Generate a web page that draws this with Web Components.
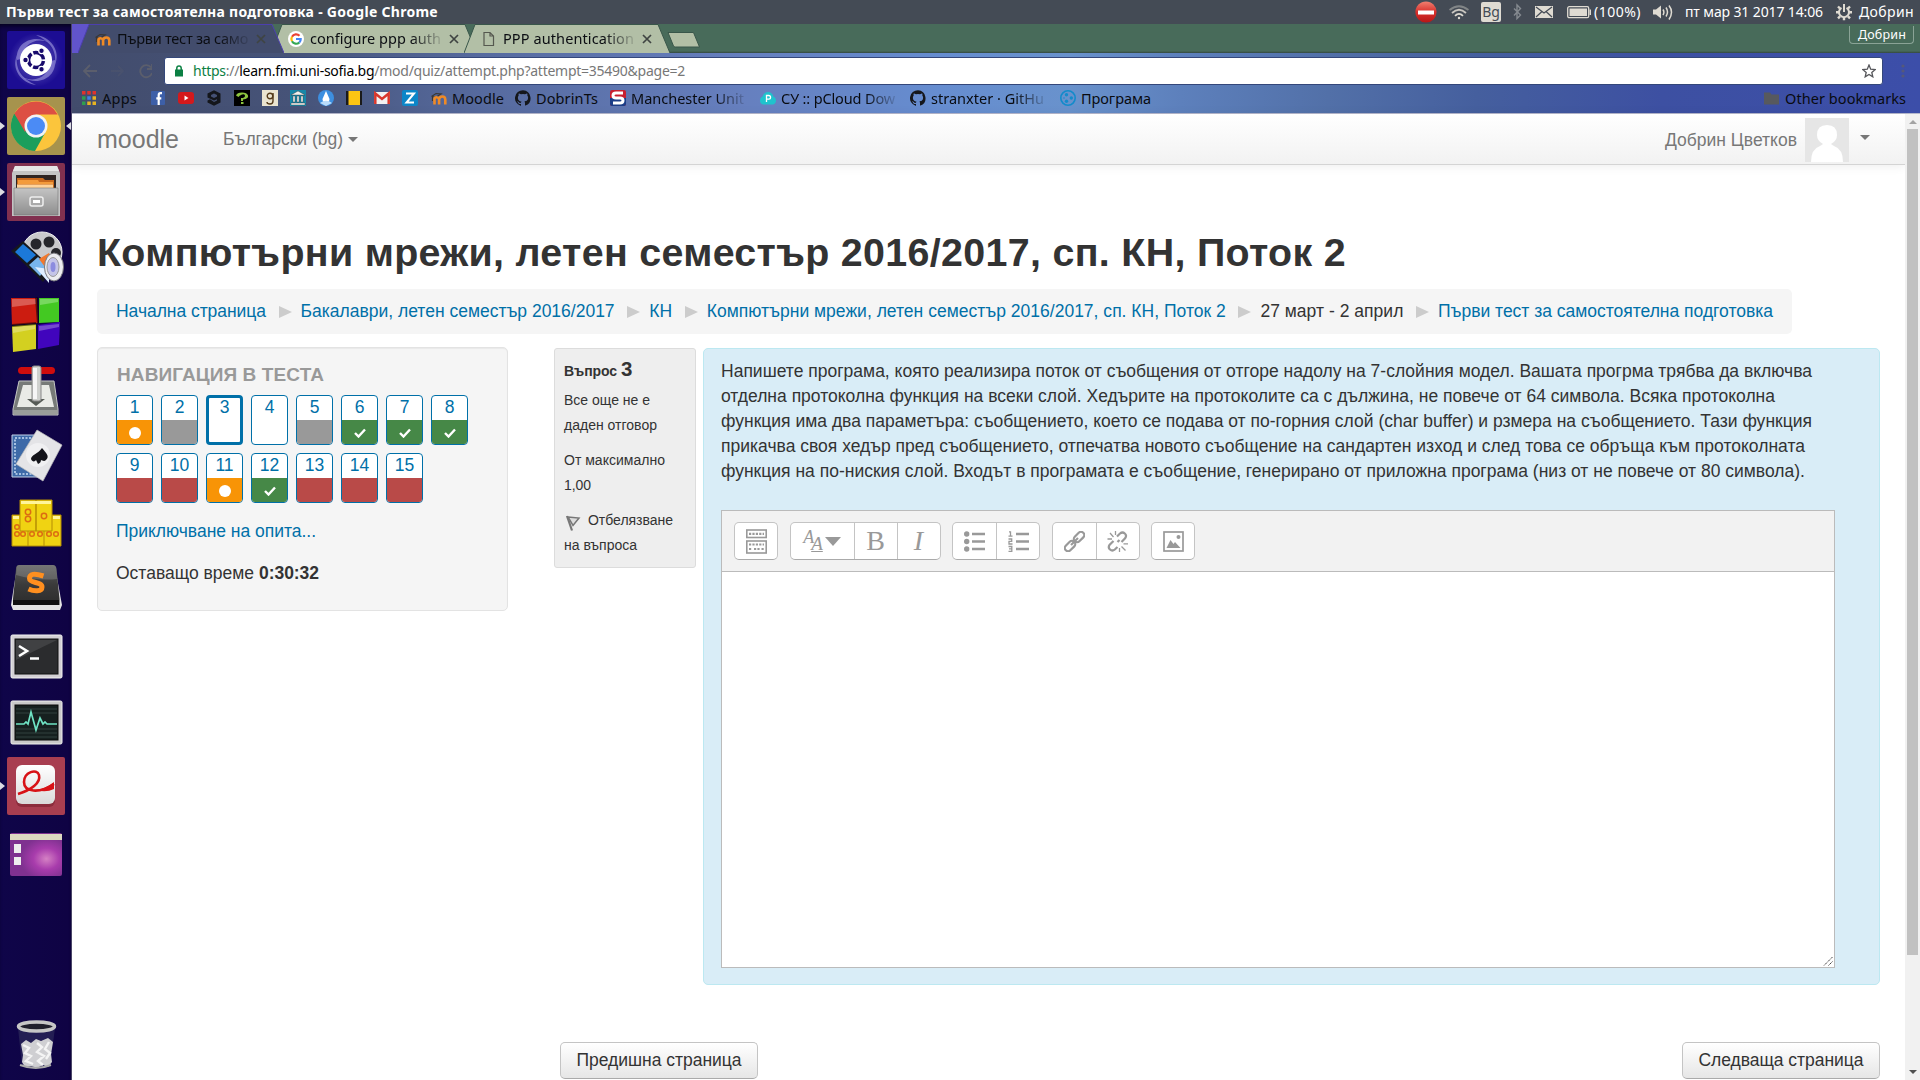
<!DOCTYPE html>
<html lang="bg">
<head>
<meta charset="utf-8">
<title>Първи тест за самостоятелна подготовка</title>
<style>
html,body{margin:0;height:1080px;overflow:hidden;background:#fff}
body{font-family:"Liberation Sans",sans-serif}
</style>
</head>
<body>
<desktop-screen></desktop-screen>
<script>
function define(name, html, setup) {
  const tpl = document.createElement('template');
  tpl.innerHTML = html;
  customElements.define(name, class extends HTMLElement {
    constructor() {
      super();
      this.attachShadow({mode: 'open'}).appendChild(tpl.content.cloneNode(true));
    }
    connectedCallback() {
      if (this.ready) return;
      this.ready = true;
      if (setup) setup(this, this.shadowRoot);
    }
  });
}

/* A single line of text tracked so that it fills the width given in "w". */
define('text-line', `<style>
:host{display:block;white-space:nowrap;flex:none}
span{display:inline-block;white-space:pre}
:host([fade]){-webkit-mask-image:linear-gradient(90deg,#000 calc(100% - 30px),rgba(0,0,0,.15));mask-image:linear-gradient(90deg,#000 calc(100% - 30px),rgba(0,0,0,.15))}
</style><span><slot></slot></span>`, (el, root) => {
  const w = parseFloat(el.getAttribute('w'));
  if (!w) return;
  el.style.width = w + 'px';
  const s = root.querySelector('span');
  const n = el.textContent.length;
  s.style.letterSpacing = ((w - s.getBoundingClientRect().width) / n).toFixed(3) + 'px';
});

define('system-bar', `<style>
:host{display:flex;height:24px;background:#444b55;color:#fff;align-items:center;font:14px/24px "Noto Sans",sans-serif;flex:none}
b{font-weight:700;font-size:14px}
svg{display:block;flex:none}
.title{margin-left:6px;flex:1}
.kb{width:20px;height:20px;border-radius:2px;background:#dfdbd2;color:#444b55;font:14px/20px "Noto Sans",sans-serif;text-align:center;margin:0 12px;flex:none}
</style>
<b class="title"><text-line w="432">Първи тест за самостоятелна подготовка - Google Chrome</text-line></b>
<svg width="22" height="24" viewBox="0 0 22 24"><defs><linearGradient id="r" x2="0" y2="1"><stop stop-color="#f08070"/><stop offset=".5" stop-color="#d8302c"/><stop offset="1" stop-color="#b81616"/></linearGradient></defs><circle cx="11" cy="12" r="10.6" fill="url(#r)"/><rect x="3" y="10.5" width="16" height="4" fill="#fff"/></svg>
<svg width="20" height="24" viewBox="0 0 20 24" style="margin-left:12px" fill="none" stroke="#dfdbd2" stroke-width="1.8"><path d="M.5 10Q10 2.500 19.500 10" opacity=".4"/><path d="M3 13Q10 6.500 17 13" opacity=".85"/><path d="M6 15.800Q10 11.800 14 15.800"/><circle cx="10" cy="18" r="1.200" fill="#dfdbd2" stroke="none"/></svg>
<div class="kb">Bg</div>
<svg width="9" height="24" viewBox="0 0 9 24" fill="none" stroke="#858a90" stroke-width="1.4"><path d="M1 8.500l6.500 6.500-3.500 3.500V5l3.500 3.500L1 15.500"/></svg>
<svg width="18" height="24" viewBox="0 0 18 24" style="margin-left:13px"><rect y="6" width="18" height="12" fill="#dfdbd2"/><path d="M1 7l8 6 8-6M1 17l6-5.500M17 17l-6-5.500" fill="none" stroke="#444b55" stroke-width="1.200"/></svg>
<svg width="25" height="24" viewBox="0 0 25 24" style="margin:0 2px 0 14px"><rect x=".7" y="6.700" width="21" height="11" rx="1.500" fill="none" stroke="#dfdbd2" stroke-width="1.300"/><rect x="2.500" y="8.500" width="17.500" height="7.500" fill="#dfdbd2"/><rect x="22.500" y="9.500" width="1.500" height="5.500" fill="#dfdbd2"/></svg>
<text-line w="47">(100%)</text-line>
<svg width="20" height="24" viewBox="0 0 20 24" style="margin-left:12px" fill="none" stroke="#dfdbd2" stroke-width="1.500"><path d="M0 9.500h3L8 5.500v13L3 14.500H0z" fill="#dfdbd2" stroke="none"/><path d="M10 9.500q1.800 2.700 0 5.500M13 7.500q3 4.500 0 9M16 5.500q5 6.500 0 14"/></svg>
<text-line w="138" style="margin-left:12px">пт мар 31 2017 14:06</text-line>
<svg width="16" height="24" viewBox="0 0 16 24" style="margin:0 7px 0 13px" fill="none" stroke="#dfdbd2"><path d="M5.500 7.800a5 5 0 1 0 5 0" stroke-width="2"/><path d="M8 4v8" stroke-width="2"/><path d="M2 6.500l2 2M14 6.500l-2 2M0 12.300h3M13 12.300h3M2 18.300l2-2M14 18.300l-2-2M8 17.300v3" stroke-width="2.400"/></svg>
<text-line w="55" style="margin-right:6px">Добрин</text-line>`);

/* Launcher */
const DOCK = {
ubuntu: ['#1c0d93', '', `<defs><radialGradient id="g"><stop stop-color="#a9a4e8"/><stop offset="1" stop-color="#a9a4e8" stop-opacity="0"/></radialGradient></defs><circle cx="29" cy="29" r="27" fill="url(#g)" opacity=".55"/><path d="M10 29C8 12 26 2 43 12C28 5 16 14 14 28zM48 29c2 17-16 27-33 17c15 7 27-2 29-16z" fill="#b9b5ee" opacity=".5"/><path d="M29 4C44 6 54 20 48 34 50 18 42 10 29 4zM29 54C14 52 4 38 10 24 8 40 16 48 29 54z" fill="#b9b5ee" opacity=".5"/><circle cx="29" cy="29" r="16" fill="#fff"/><circle cx="29" cy="29" r="7.500" fill="none" stroke="#17096b" stroke-width="3.500" stroke-dasharray="13.700 2" stroke-dashoffset="-1"/><g fill="#17096b" stroke="#fff" stroke-width="1.200"><circle cx="18.500" cy="29" r="2.800"/><circle cx="34.500" cy="19.800" r="2.800"/><circle cx="34.500" cy="38.200" r="2.800"/></g>`],
chrome: ['#a6934d', 'lr', `<circle cx="29" cy="29" r="25" fill="#fbc53c"/><path d="M7.300 16.500A25 25 0 0 0 28 54L38 36 29 29 20 33z" fill="#1b9e5c"/><path d="M7.300 16.500A25 25 0 0 1 50.700 17.500H29L18 35z" fill="#dd4f43"/><circle cx="29" cy="29" r="11.500" fill="#f3f3f3"/><circle cx="29" cy="29" r="9" fill="#4b8bf5"/>`],
files: ['#81304f', 'l', `<defs><linearGradient id="f" x2="0" y2="1"><stop stop-color="#c4c4c4"/><stop offset="1" stop-color="#8e8e8e"/></linearGradient></defs><path d="M8 3h42l3 7v43H5V10z" fill="#c4c4c4"/><path d="M8 3h42l2 5H6z" fill="#e6e6e6"/><path d="M9 12h40v13H9z" fill="#2f2523"/><path d="M10 15h26l2 2h9v8H10z" fill="#c96a1e"/><path d="M11 17h20l1 2h14v2H11z" fill="#f39b3c"/><path d="M10 21.500h36V25H10z" fill="#ffd39a"/><path d="M7 25h44v27H7z" fill="url(#f)" stroke="#777" stroke-width=".6"/><rect x="23" y="34" width="13" height="9" rx="2" fill="#aaa" stroke="#eee" stroke-width="1.500"/><rect x="26" y="37" width="7" height="3" fill="#fff"/>`],
video: ['', '', `<ellipse cx="35" cy="23" rx="20" ry="20" fill="#c9c9cb" stroke="#eee"/><g fill="#26262b"><circle cx="29" cy="15" r="5.500"/><circle cx="42" cy="13" r="5.500"/><circle cx="49" cy="24" r="5"/><circle cx="22" cy="24" r="4"/></g><path d="M16 12L46 40 36 53 4 22z" fill="#16181d"/><path d="M16 15L29 26 20 34 8 23z" fill="#1c79d8"/><path d="M31 28l10 9-8 10-11-11z" fill="#78b5ec"/><path d="M32 30l10-6 4 8-8 6z" fill="#f2782c"/><path d="M28 38l14 2v14z" fill="#dfeeff"/><ellipse cx="47" cy="38" rx="9.500" ry="14" fill="#ececf0" stroke="#77777c"/><ellipse cx="46" cy="38" rx="6" ry="9.500" fill="#c4c4e8" stroke="#999"/><ellipse cx="46" cy="38" rx="2.500" ry="5" fill="#8c8cdf"/>`],
blocks: ['', '', `<path d="M4 3h26l1 25-26 2z" fill="#cc1c10"/><path d="M32 3h20v24l-20 1z" fill="#43c922"/><path d="M5 31l24-2v25L6 57z" fill="#d3d020"/><path d="M31 30l22-3-1 23-21 4z" fill="#4105bd"/><path d="M5 4h24v5L5 12zM33 4h18v3l-18 3zM6 32l22-2v4L6 38zM32 31l20-2v3l-20 4z" fill="#fff" opacity=".28"/><path d="M28 3l3-1 1 26-2 1zM5 29l24-2v3L5 32z" fill="#000" opacity=".5"/>`],
lever: ['', '', `<g transform="translate(0 2)"><path d="M12 18h35l4 28v6H6v-6z" fill="#777b78" stroke="#c3c5c3"/><path d="M16 22h26l5 22H10z" fill="#e9ebe6"/><path d="M20 36h18l-9 7z" fill="#555b55"/><path d="M7 47h43v4H7z" fill="#9a9e9a"/><rect x="11" y="4" width="37" height="7" rx="3.500" fill="#cf0d0d"/><rect x="25" y="3" width="9" height="35" rx="2" fill="#cfd1ce" stroke="#888"/><path d="M26 5h4v31h-4z" fill="#f6f6f6"/></g>`],
cards: ['', '', `<path d="M5 8h26v42H5z" fill="#3e6aa8" stroke="#c4d3e8"/><path d="M8 11h20v36H8z" fill="none" stroke="#a7c1e2" stroke-width="2" stroke-dasharray="2 1.500"/><path d="M30 3l25 15-19 36-27-17z" fill="#e4e4e7" stroke="#bbb" stroke-width=".7"/><circle cx="31" cy="28" r="12" fill="#f0f0f2"/><path d="M35 21c4 5 8 8 4 12-2 2-4 0-5 0 0 2-1 3-3 4l-2-4c-1 2-4 2-5-1 0-4 7-5 11-11z" fill="#14141a"/>`],
mahjong: ['', '', `<g fill="#f0d312" stroke="#b58d05"><path d="M5 22h49v31H5z"/><path d="M21 38v15M37 38v15"/><path d="M13 7h16v31H13zM29 7h16v31H29z"/></g><path d="M14 8h30v3H14zM6 23h6v3H6zM46 23h7v3h-7z" fill="#fff59a"/><g fill="none" stroke="#dc6d12" stroke-width="1.500"><circle cx="21" cy="19" r="2.700"/><circle cx="21" cy="26" r="2.700"/><circle cx="37" cy="23" r="2.700"/><circle cx="10" cy="34" r="2.300"/><circle cx="10" cy="41" r="2.300"/><circle cx="16" cy="41" r="2.300"/><circle cx="25" cy="41" r="2.300"/><circle cx="33" cy="41" r="2.300"/><circle cx="42" cy="41" r="2.300"/><circle cx="49" cy="41" r="2.300"/></g>`],
sublime: ['', '', `<defs><linearGradient id="s" x2="0" y2="1"><stop stop-color="#5a5a5a"/><stop offset=".5" stop-color="#3a3a3a"/><stop offset="1" stop-color="#2c2c2c"/></linearGradient></defs><path d="M10 8h38l7 38-2 5H6l-2-5z" fill="#e4e4e4"/><path d="M12 6h34q3 0 3.500 4l3 30v6H6v-6l3-30q0-4 3-4z" fill="url(#s)"/><path d="M6 41h46v5H6z" fill="#111"/><path d="M12 6h34q3 0 3.500 4l1 10Q30 22 9 16l.5-6q0-4 2.500-4z" fill="#fff" opacity=".17"/><path d="M36.500 17q-14-4.500-14 2.500c0 5 12.500 3 12.500 8.500 0 5-8 4.500-13.500 2" fill="none" stroke="#ff8f1f" stroke-width="5"/>`],
terminal: ['', '', `<g transform="translate(0 3)"><rect x="4" y="7" width="51" height="43" rx="1.500" fill="#d3d0d4" stroke="#f2f2f2"/><rect x="8" y="11" width="43" height="35" fill="#2b2c2e" stroke="#111"/><path d="M9 12h41L9 32z" fill="#fff" opacity=".1"/><path d="M12 18l8 5-8 5M23 30.500h9" fill="none" stroke="#fff" stroke-width="2.600"/></g>`],
monitor: ['', '', `<g transform="translate(0 3)"><rect x="4" y="7" width="51" height="43" rx="1.500" fill="#c9c9c9" stroke="#efefef"/><rect x="8" y="11" width="43" height="35" fill="#16201f" stroke="#0a0a0a"/><path d="M9 15h41M9 19h41M9 35h41M9 39h41M9 43h41" stroke="#30403e"/><path d="M9 30h8l2-2 2 2 3-12 5 18 4-12 3 6 2-2 2 2h10" fill="none" stroke="#6fe3c4" stroke-width="1.700"/></g>`],
reader: ['#a83e50', 'l', `<defs><linearGradient id="p" x2="0" y2="1"><stop stop-color="#fff"/><stop offset="1" stop-color="#dadada"/></linearGradient></defs><rect x="9" y="11" width="39" height="39" rx="6" fill="#701a28" opacity=".5"/><rect x="9" y="8" width="39" height="39" rx="6" fill="url(#p)"/><path d="M11 37C24 33 34 26 32 18 30 11 17 15 17 25c0 10 15 12 30 2" fill="none" stroke="#d81216" stroke-width="2.600"/><path d="M29 33q9-1 18-8v7q-8 4-18 1z" fill="#d81216"/>`],
desktop: ['', '', `<defs><radialGradient id="d" cx=".7" cy=".6"><stop stop-color="#d581c4"/><stop offset=".5" stop-color="#a83cac"/><stop offset="1" stop-color="#7f3190"/></radialGradient></defs><g transform="translate(0 3)"><rect x="3" y="7" width="52" height="43" rx="2" fill="url(#d)"/><path d="M3 8h52v6H3z" fill="#dcd9c0"/><rect x="7" y="18" width="7" height="9" fill="#eee"/><rect x="7" y="31" width="7" height="8" fill="#eee"/></g>`],
trash: ['', '', `<path d="M11 12l4 38q14 6 28 0l5-38z" fill="#2c295a" opacity=".7"/><path d="M14 28l5-4 5 3 5-4 5 2 7-3 5 4-2 12 1 8-4 5-5-2-6 3-6-2-6 1-3-5 1-7z" fill="#cfcfd2"/><path d="M16 29l6 3-4 5 6 3-5 5 7 3M30 27l5 4-5 5 7 4-6 5 5 4M42 26l-4 7 5 4-4 6" fill="none" stroke="#f4f4f4" stroke-width="2.400"/><ellipse cx="29.500" cy="10.500" rx="18" ry="4.500" fill="#20202c" stroke="#c6c6c6" stroke-width="3.500"/><path d="M13 49q16 6 31 0" fill="none" stroke="#aaa" stroke-width="2"/>`]
};
define('dock-item', `<style>
:host{display:flex;width:72px;height:58px;align-items:center;justify-content:space-between;flex:none;position:relative}
.tile{width:58px;height:58px;border-radius:2px}
i{width:0;height:0;border:4.500px solid transparent;border-right:0;border-left:5px solid #dcdce2;visibility:hidden;flex:none}
i.e{border:4.500px solid transparent;border-left:0;border-right:5px solid #dcdce2}
:host([l]) .w,:host([r]) .e{visibility:visible}
</style><i class="w"></i><div class="tile"></div><i class="e"></i>`, (el, root) => {
  const [bg, marks, art] = DOCK[el.getAttribute('icon')];
  const tile = root.querySelector('.tile');
  tile.style.background = bg || 'none';
  if (marks.includes('l')) el.setAttribute('l', '');
  if (marks.includes('r')) el.setAttribute('r', '');
  tile.innerHTML = '<svg width="58" height="58" viewBox="0 0 58 58" style="display:block">' + art + '</svg>';
});
define('app-dock', `<style>
:host{display:flex;flex-direction:column;gap:8px;width:72px;box-sizing:border-box;background:linear-gradient(90deg,#0f0549,#0f0344 95%);border-right:1px solid #4a4668;padding-top:7px;box-shadow:inset 0 4px 4px -2px #05021c;flex:none;padding-bottom:6px}
dock-item{width:71px}.end{margin-top:auto}
</style>` + Object.keys(DOCK).map(k => `<dock-item icon="${k}"${k === 'trash' ? ' class="end"' : ''}></dock-item>`).join(''));

/* Browser */
const MOODLE = '<path d="M.5 6.500L5 3.500l5 .5-4 2.500-4.500.5v4" fill="none" stroke="#3a3734" stroke-width="1.200"/><path d="M3.500 14.500V9q0-1.800 2-1.800t2.600 1.800v5.500M8.100 14.500V9q.6-2.500 3.300-2.500T14.300 9.500v5" fill="none" stroke="#f08a25" stroke-width="2.600"/>';
const GITHUB = '<path fill="#15171c" d="M8 .2a8 8 0 0 0-2.500 15.600c.4 0 .5-.2.5-.4v-1.500c-2.200.5-2.700-1-2.700-1-.4-.9-.9-1.200-.9-1.200-.7-.5.1-.5.1-.5.800.1 1.200.8 1.200.8.7 1.200 1.900.9 2.300.7.1-.5.3-.9.500-1.100-1.800-.2-3.600-.9-3.600-4 0-.9.3-1.600.8-2.100-.1-.2-.4-1 .1-2.100 0 0 .7-.2 2.200.8a7.500 7.500 0 0 1 4 0c1.500-1 2.200-.8 2.200-.8.4 1.100.2 1.900.1 2.100.5.600.8 1.300.8 2.100 0 3.100-1.900 3.700-3.700 3.900.3.300.6.800.6 1.500v2.200c0 .2.100.5.500.4A8 8 0 0 0 8 .2z"/>';
const ICON = {
apps: '<g transform="translate(1 1) scale(.875)"><path fill="#e0332c" d="M0 0h4v4H0zM6 0h4v4H6zM12 0h4v4h-4z"/><path fill="#2e9e4e" d="M0 6h4v4H0z"/><path fill="#3f7fe8" d="M6 6h4v4H6z"/><path fill="#e8b422" d="M12 6h4v4h-4zM6 12h4v4H6zM12 12h4v4h-4z"/><path fill="#2e9e4e" d="M0 12h4v4H0z"/></g>',
fb: '<rect x="1" y="1" width="14" height="14" rx="1" fill="#3d5fa8"/><path d="M12 3.200h-1.500q-1.800 0-1.800 2V15M6.300 8.300h5" fill="none" stroke="#fff" stroke-width="2.200"/>',
yt: '<rect y="2" width="16" height="12" rx="3" fill="#d4191c"/><path d="M6.500 5.500v5l4-2.500z" fill="#fff"/>',
nine: '<path d="M8 .3l6.500 3.200v9L8 15.800l-6.500-3.300v-2L4 9.200l4 2.800 3-1.500V9.200L8 10.500 1.500 7.500v-4zM8 3.500L5 5v1.500L8 8l3-1.500V5z" fill="#14161b"/>',
so: '<rect width="16" height="16" fill="#000"/><path d="M2 5.500q1-3 6-3t6 3-5 4V11H7V8q4 0 4-2.300T8 4.500 4.500 7z" fill="#8dc63f"/><rect x="7" y="12" width="2.500" height="2" fill="#8dc63f"/>',
good: '<rect width="16" height="16" fill="#eae4d0"/><circle cx="8" cy="6" r="2.800" fill="none" stroke="#553b1a" stroke-width="1.400"/><path d="M11 3v8q0 3-3 3t-3-2" fill="none" stroke="#553b1a" stroke-width="1.400"/>',
uni: '<rect width="16" height="16" fill="#1787a8"/><path d="M8 1l7 4H1zM1 13h14v2H1zM3 6h2v6H3zM7 6h2v6H7zM11 6h2v6h-2z" fill="#f1f1ee" stroke="#333" stroke-width=".4"/>',
drop: '<circle cx="8" cy="8" r="8" fill="#3d8fe0"/><path d="M8 1l3.500 8a3.500 3.500 0 0 1-7 0z" fill="#fff"/><path d="M2 13q6-4.500 12 0l-6 3z" fill="#b9dcfa"/>',
yel: '<rect x="0" y="1" width="16" height="14" fill="#fcc514"/><path d="M0 1h2.500v14H0zM14 1h2v14h-2z" fill="#1a1a1a"/>',
gmail: '<rect y="2" width="16" height="12" rx="1" fill="#f2f2f2"/><path d="M1.300 14V3.500L8 9l6.700-5.500V14" fill="none" stroke="#d9372c" stroke-width="2.500"/>',
zam: '<rect width="16" height="16" rx="2" fill="#0c86c8"/><path d="M4 3.500h8L4.500 12.500H12" fill="none" stroke="#fff" stroke-width="2"/>',
moodle: MOODLE, github: GITHUB,
manu: '<rect width="16" height="16" rx="2" fill="#c81f30"/><path d="M0 8h16v6q0 2-2 2H2q-2 0-2-2z" fill="#1c3e87"/><path d="M13 3H6Q3 3 3 5.500T6 8h4q3 0 3 2.500T10 13H3" fill="none" stroke="#fff" stroke-width="3"/>',
pcloud: '<path d="M3 14.500q-3-1-3-4t2.500-4Q4 2 8 2t5.500 4.500Q16 7.500 16 10.500t-3 4z" fill="#1fc3cd"/><path d="M6.500 12V5.500h2.200a1.800 1.800 0 0 1 0 3.700H6.500" fill="none" stroke="#fff" stroke-width="1.300"/>',
prog: '<circle cx="8" cy="8" r="7.200" fill="none" stroke="#138bcb" stroke-width="1.600"/><g fill="#138bcb"><circle cx="6.500" cy="4.800" r="1.700"/><circle cx="11.300" cy="8" r="1.700"/><circle cx="6.500" cy="11.200" r="1.700"/><circle cx="4" cy="8" r=".8"/></g>',
folder: '<path d="M0 2.500h6l1.500 2H15v10H0z" fill="#57595e"/>',
google: '<circle cx="8" cy="8" r="8" fill="#fff"/><g fill="none" stroke-width="2.200"><path d="M4 5.700A4.700 4.700 0 0 1 11.500 4.800" stroke="#ea4335"/><path d="M4 5.700a4.700 4.700 0 0 0 0 4.600" stroke="#fbbc05"/><path d="M4 10.300a4.700 4.700 0 0 0 7.300 1.200" stroke="#34a853"/><path d="M11.300 11.500A4.700 4.700 0 0 0 12.700 8H8" stroke="#4285f4"/></g>',
page: '<path d="M3 1.500h6L12.500 5v9.500H3zM9 1.500V5h3.500" fill="none" stroke="#55584f" stroke-width="1.200"/>'
};
define('fav-icon', `<style>:host{display:block;width:16px;height:16px;flex:none}svg{display:block}</style><svg width="16" height="16" viewBox="0 0 16 16"></svg>`,
  (el, root) => { root.querySelector('svg').innerHTML = ICON[el.getAttribute('name')]; });

define('browser-tab', `<style>
:host{display:block;height:29px;width:206px;margin-right:-13px;flex:none;position:relative;color:#0b0d12}
svg.bg{position:absolute;left:0;top:0}
.in{position:relative;display:flex;align-items:center;height:29px;padding-left:17px}
slot{display:block;margin-left:6px;line-height:29px}
.x{margin-left:8px;display:block}
</style><svg class="bg" width="206" height="29"><path d="M0 29L11 .5H194L206 29" stroke-width="1"/></svg>
<div class="in"><slot name="icon" style="margin:0"></slot><slot></slot><svg class="x" width="10" height="10" viewBox="0 0 10 10"><path d="M1 1l8 8M9 1L1 9" stroke="#3f4442" stroke-width="1.700"/></svg></div>`, (el, root) => {
  const p = root.querySelector('.bg path');
  const on = el.hasAttribute('active');
  p.setAttribute('fill', on ? '#424c6c' : '#b2bfa6');
  p.setAttribute('stroke', on ? '#4c3fae' : '#39564a');
});

define('bookmark-item', `<style>:host{display:flex;align-items:center;gap:5px;flex:none}</style><slot name="icon"></slot><slot></slot>`);

const marks = [['apps',81,'Apps',35],['fb',150],['yt',178],['nine',206],['so',234],['good',262],['uni',290],['drop',318],['yel',346],['gmail',374],['zam',402],
['moodle',431,'Moodle',52],['github',515,'DobrinTs',62],['manu',610,'Manchester Unit',113,1],['pcloud',760,'СУ :: pCloud Dow',114,1],['github',910,'stranxter · GitHu',113,1],['prog',1060,'Програма',70]];
let edge = 72;
const markHtml = marks.map(m => {
  const s = `<bookmark-item style="margin-left:${m[1] - edge}px"><fav-icon slot="icon" name="${m[0]}"></fav-icon>` +
    (m[2] ? `<text-line w="${m[3]}"${m[4] ? ' fade' : ''}>${m[2]}</text-line>` : '') + '</bookmark-item>';
  edge = m[1] + 16 + (m[2] ? 5 + m[3] : 0);
  return s;
}).join('');

define('browser-frame', `<style>
:host{display:flex;flex-direction:column;height:90px;flex:none;box-sizing:border-box;font:14.500px/20px "Noto Sans",sans-serif;color:#090b10}
.strip{height:29px;display:flex;background:linear-gradient(#486b5a 27px,#33483f 29px);position:relative;flex:none}
.strip:before{content:"";width:6px;background:#6154cc}
.lead{position:absolute;left:0;top:0}
browser-tab{z-index:1}browser-tab[active]{z-index:2}
.new{margin:8px 0 0 10px}
.who{margin:2px 6px 0 auto;width:65px;height:18px;border:1px solid #8aa396;border-top:0;border-radius:0 0 4px 4px;box-sizing:border-box;color:#fff;font-size:12.500px;line-height:18px;padding-left:8px}
.bar{flex:1;display:flex;flex-direction:column;border-bottom:1px solid #b5b8cc;background:linear-gradient(90deg,#424c6c 0,#465378 12%,#566a9e 22%,#667fbe 36%,#668dd0 47%,#6992cc 54%,#5d80bc 60%,#5270a8 68%,#455f9e 76%,#3d50a2 86%,#3c4ea9 100%)}
.row{display:flex;align-items:center;height:27px;padding-top:4px}
.row svg{display:block;flex:none}
.url{margin-left:12px;width:1717px;height:26px;background:#fff;border:1px solid #34477a;border-radius:3px;display:flex;align-items:center;flex:none;color:#777;font-size:14px}
.url text-line{margin-left:10px}
.marks{display:flex;align-items:center;flex:1;padding-bottom:1px}
.marks .other{margin:0 14px 0 auto}
</style>
<div class="strip"><svg class="lead" width="20" height="29"><path d="M0 0H18L7 29H0z" fill="#6154cc"/></svg>
<browser-tab active><fav-icon slot="icon" name="moodle"></fav-icon><text-line fade w="131">Първи тест за само</text-line></browser-tab><browser-tab><fav-icon slot="icon" name="google"></fav-icon><text-line fade w="131">configure ppp auth</text-line></browser-tab><browser-tab><fav-icon slot="icon" name="page"></fav-icon><text-line fade w="131">PPP authentication</text-line></browser-tab>
<svg class="new" width="34" height="16"><path d="M1 .5h25.500l6 14.500H8.500q-1.500 0-2-1z" fill="#b2bfa6" stroke="#39564a"/></svg>
<div class="who"><text-line w="48">Добрин</text-line></div></div>
<div class="bar"><div class="row">
<svg width="80" height="20" viewBox="0 0 80 20" fill="none" stroke="#5b5e6c" stroke-width="1.800"><path d="M25 10H12M18 4l-6 6 6 6"/><path d="M39 10h12M46 5l5 5-5 5" opacity=".25"/><path d="M79 6.500A6 6 0 1 0 80 12M80 3v5h-5"/></svg>
<div class="url"><svg width="8" height="12" viewBox="0 0 8 12" style="margin-left:10px"><path d="M1.800 5V3.300a2.200 2.200 0 0 1 4.400 0V5" fill="none" stroke="#0b8043" stroke-width="1.500"/><rect y="4.500" width="8" height="7" fill="#0b8043"/></svg>
<text-line w="492"><span style="color:#0b8043">https</span>://<span style="color:#000">learn.fmi.uni-sofia.bg</span>/mod/quiz/attempt.php?attempt=35490&amp;page=2</text-line>
<svg width="14" height="14" viewBox="0 0 14 14" style="margin:0 6px 0 auto"><path d="M7 1l1.700 4.200 4.500.3-3.400 2.900 1 4.400L7 10.400l-3.800 2.400 1-4.400L.8 5.500l4.500-.3z" fill="none" stroke="#55565a" stroke-width="1.300"/></svg></div>
<svg width="4" height="14" viewBox="0 0 4 14" style="margin-left:18px" fill="#55597a"><circle cx="2" cy="2" r="1.600"/><circle cx="2" cy="7" r="1.600"/><circle cx="2" cy="12" r="1.600"/></svg>
</div><div class="marks">${markHtml}<bookmark-item class="other"><fav-icon slot="icon" name="folder"></fav-icon><text-line w="121">Other bookmarks</text-line></bookmark-item></div></div>`);

/* Moodle page */
define('site-header', `<style>
:host{display:flex;height:51px;box-sizing:border-box;background:linear-gradient(#fff,#f2f2f2);border-bottom:1px solid #d4d4d4;color:#777;align-items:center;font-size:17.500px;line-height:25px;box-shadow:0 1px 10px rgba(0,0,0,.08)}
.logo{font-size:25px;margin-left:25px}
.caret{width:0;height:0;border:5px solid transparent;border-top-color:#777;border-bottom:0}
.lang{margin:0 5px 0 44px}
.user{margin:2px 8px 0 auto}
.pic{width:44px;height:44px;display:block;margin-top:1px}
.c2{margin:-4px 35px 0 11px}
</style><text-line class="logo" w="82">moodle</text-line><text-line class="lang" w="120">Български (bg)</text-line><div class="caret"></div>
<text-line class="user" w="132">Добрин Цветков</text-line><svg class="pic" viewBox="0 0 44 44"><rect width="44" height="44" fill="#e6e6e6"/><path d="M6 44q0-13 9-16l3-2q-6-3-6-9 0-10 10-10t10 10q0 6-6 9l3 2q9 3 9 16z" fill="#fff"/></svg><div class="caret c2"></div>`);

define('bread-crumbs', `<style>
:host{display:flex;align-items:center;height:45px;width:1695px;box-sizing:border-box;background:#f5f5f5;border-radius:5px;padding-left:19px;line-height:25px;color:#333}
a{color:#0070a8;display:block}
i{width:0;height:0;border:6px solid transparent;border-left:13px solid #ccc;border-right:0;margin:0 9px 0 12.600px;flex:none}
</style><a><text-line w="150">Начална страница</text-line></a><i></i><a><text-line w="314">Бакалаври, летен семестър 2016/2017</text-line></a><i></i><a><text-line w="23">КН</text-line></a><i></i><a><text-line w="519">Компютърни мрежи, летен семестър 2016/2017, сп. КН, Поток 2</text-line></a><i></i><text-line w="143">27 март - 2 април</text-line><i></i><a><text-line w="335">Първи тест за самостоятелна подготовка</text-line></a>`);

define('quiz-button', `<style>
:host{display:flex;flex-direction:column;width:37px;height:50px;box-sizing:border-box;border:1px solid #0070a8;border-radius:4px;background:#fff;overflow:hidden;color:#0070a8;text-align:center;line-height:22px}
:host([state=current]){border-width:3px}
:host([state=current]) .n{line-height:18px}
.n{height:24px;flex:none}.s{height:24px;display:flex;align-items:center;justify-content:center}
:host([state=partial]) .s{background:#f89406}:host([state=gray]) .s{background:#999}:host([state=right]) .s{background:#468847}:host([state=wrong]) .s{background:#b94a48}
svg{display:none}
:host([state=partial]) .dot,:host([state=right]) .tick{display:block}
</style><div class="n"><slot></slot></div><div class="s"><svg class="dot" width="12" height="12" style="margin-top:1px"><circle cx="6" cy="6" r="6" fill="#fff"/></svg><svg class="tick" width="12" height="10" viewBox="0 0 12 10" style="margin-top:2px"><path d="M1 5l3.500 3.500L11 1.500" fill="none" stroke="#fff" stroke-width="2.400"/></svg></div>`);
const states = ['partial','gray','current','open','gray','right','right','right','wrong','wrong','partial','right','wrong','wrong','wrong'];
define('quiz-nav', `<style>
:host{display:block;width:411px;height:264px;box-sizing:border-box;background:#f5f5f5;border:1px solid #e3e3e3;border-radius:5px;box-shadow:inset 0 1px 1px rgba(0,0,0,.05);padding:14px 18px;flex:none;color:#333;line-height:25px}
h2{margin:0 0 8px 1px;font-size:19px;line-height:25px;color:#999}
.grid{display:flex;flex-wrap:wrap;gap:8px;width:365px}
.end{color:#0070a8;margin:16px 0 17px}
.time{display:flex;gap:5px}
</style><h2><text-line w="207">НАВИГАЦИЯ В ТЕСТА</text-line></h2><div class="grid">${states.map((s, i) => `<quiz-button state="${s}">${i + 1}</quiz-button>`).join('')}</div>
<div class="end"><text-line w="200">Приключване на опита...</text-line></div><div class="time"><text-line w="138">Оставащо време</text-line><b><text-line w="60">0:30:32</text-line></b></div>`);

define('question-info', `<style>
:host{display:block;width:142px;height:220px;box-sizing:border-box;background:#eee;border:1px solid #dcdcdc;border-radius:3px;padding:7px 9px;font-size:14px;line-height:25px;color:#333;flex:none}
.q{display:flex;align-items:baseline;gap:4px;font-weight:700;height:32px}
.q b{font-size:20.500px;line-height:25px}
.m{margin:10px 0}
.f{display:flex;align-items:center}
</style><div class="q"><text-line w="53">Въпрос</text-line><b>3</b></div>
<text-line w="86">Все още не е</text-line><text-line w="93">даден отговор</text-line>
<div class="m"><text-line w="101">От максимално</text-line><text-line w="27">1,00</text-line></div>
<div class="f"><svg width="17" height="18" viewBox="0 0 17 18" style="margin:5px 6px 0 1px"><path d="M2 2l5 14.500" stroke="#777" stroke-width="2.200"/><path d="M3 3l11 1-6 7.500z" fill="#ddd" stroke="#777" stroke-width="1.500"/></svg><text-line w="85">Отбелязване</text-line></div><text-line w="73">на въпроса</text-line>`);

define('tool-group', `<style>:host{display:flex;height:38px;box-sizing:border-box;border:1px solid #c4c4c4;border-bottom-color:#aaa;border-radius:5px;background:#fff;overflow:hidden;flex:none}
::slotted(*){border-left:1px solid #c4c4c4;width:43px;height:36px;display:flex;align-items:center;justify-content:center;box-sizing:border-box}
::slotted(:first-child){border-left:0}
::slotted(:only-child){width:42px}
::slotted(.wide){width:63px!important}</style><slot></slot>`);

define('rich-editor', `<style>
:host{display:flex;flex-direction:column;width:1114px;height:458px;box-sizing:border-box;border:1px solid #bbb;background:#fff}
.tools{display:flex;gap:11.500px;height:61px;flex:none;box-sizing:border-box;border-bottom:1px solid #bbb;background:#f2f2f2;padding:11px 0 0 12px}
.area{flex:1;display:flex;align-items:flex-end;justify-content:flex-end}
svg{display:block;fill:none;stroke:#999}
b,em{font-family:"Liberation Serif",serif;color:#999;font-weight:400;font-size:28px;line-height:36px}
span.wide{font:italic 20px/20px "Liberation Serif",serif;color:#999}
.a1{font-size:18px;margin:-8px -3px 0 0}.a2{font-size:19px;margin-top:6px;text-decoration:underline}
</style><div class="tools">
<tool-group><span><svg width="21" height="25" viewBox="0 0 21 25" stroke-width="1.600"><rect x=".8" y="1" width="19.400" height="7.500"/><rect x=".8" y="12" width="19.400" height="12"/><path d="M3 4.800h15M3 15.500h15M3 20h3M8 20h6M15.500 20h3" stroke-dasharray="2.200 1.200" stroke-width="2.200"/></svg></span></tool-group>
<tool-group><span class="wide"><span class="a1">A</span><span class="a2">A</span><svg width="16" height="9" style="margin-left:2px"><path d="M0 0h16L8 9z" fill="#999" stroke="none"/></svg></span><b>B</b><em>I</em></tool-group>
<tool-group><span><svg width="21" height="21" viewBox="0 0 21 21" stroke-width="2.300"><path d="M8 3h13M8 10.500h13M8 18h13"/><g fill="#999" stroke="none"><circle cx="2.700" cy="3" r="2.700"/><circle cx="2.700" cy="10.500" r="2.700"/><circle cx="2.700" cy="18" r="2.700"/></g></svg></span>
<span><svg width="21" height="21" viewBox="0 0 21 21" stroke-width="2.300"><path d="M8 3h13M8 10.500h13M8 18h13"/><path d="M1 .8h1.500V5M.5 5.200h4M.5 8h3.200v2.400H1V13h3.500M.5 15.500h3.300V20.300H.5M1 17.900h2.500" stroke-width="1.300"/></svg></span></tool-group>
<tool-group><span><svg width="21" height="21" viewBox="0 0 21 21" stroke-width="2.200"><rect x="9" y="2.800" width="12" height="6.500" rx="3.200" transform="rotate(-45 15 6)"/><rect x="0" y="11.800" width="12" height="6.500" rx="3.200" transform="rotate(-45 6 15)"/><path d="M7 14l7-7"/></svg></span>
<span><svg width="21" height="21" viewBox="0 0 21 21" stroke-width="2.200"><path d="M10 5.500l3-3q2.500-2 4.800 0t.3 4.800L14.500 11M10.500 16l-2.700 2.500q-2.500 2-4.800 0T2.700 13.700L6.500 10M12.500 9l-2 2"/><path d="M3 2l3.500 4M8.500 0v4M.5 8H5M18.500 19.500l-4-4M12.500 21v-4M21 12.800h-4.500" stroke-width="1.300"/></svg></span></tool-group>
<tool-group><span><svg width="21" height="21" viewBox="0 0 21 21"><rect x="1" y="1" width="19" height="19" stroke-width="1.700"/><path d="M3.500 17l4-8 3 4 1.500-2 5.500 6z" fill="#999" stroke="none"/><circle cx="15.500" cy="6" r="2" fill="#999" stroke="none"/></svg></span></tool-group>
</div><div class="area"><svg width="11" height="11" viewBox="0 0 11 11"><path d="M1 9.500L9.500 1M5.500 9.500L9.500 5.500" stroke="#444" stroke-width="1" stroke-dasharray="1.500 .6"/></svg></div>`);

define('question-body', `<style>
:host{display:block;width:1177px;height:637px;box-sizing:border-box;background:#d9edf7;border:1px solid #bce8f1;border-radius:5px;padding:10px 17px;line-height:25px;color:#333;flex:none}
rich-editor{margin-top:26px}
</style>
<text-line w="1091">Напишете програма, която реализира поток от съобщения от отгоре надолу на 7-слойния модел. Вашата прогрма трябва да включва</text-line>
<text-line w="1054">отделна протоколна функция на всеки слой. Хедърите на протоколите са с дължина, не повече от 64 символа. Всяка протоколна</text-line>
<text-line w="1091">функция има два параметъра: съобщението, което се подава от по-горния слой (char buffer) и рзмера на съобщението. Тази функция</text-line>
<text-line w="1084">прикачва своя хедър пред съобщението, отпечатва новото съобщение на сандартен изход и след това се обръща към протоколната</text-line>
<text-line w="1084">функция на по-ниския слой. Входът в програмата е съобщение, генерирано от приложна програма (низ от не повече от 80 символа).</text-line>
<rich-editor></rich-editor>`);

define('page-button', `<style>:host{display:flex;align-items:center;justify-content:center;width:198px;height:37px;box-sizing:border-box;border:1px solid #c4c4c4;border-bottom-color:#aaa;border-radius:5px;background:linear-gradient(#fff,#e6e6e6);color:#333;line-height:25px}</style><slot></slot>`);

define('scroll-track', `<style>
:host{display:flex;flex-direction:column;align-items:center;width:15px;background:#f1f1f1;flex:none;justify-content:space-between}
.up,.dn{width:0;height:0;border:4px solid transparent;flex:none}
.up{border-bottom-color:#a3a3a3;border-top:0;margin:6px 0 5px}.dn{border-top-color:#505050;border-bottom:0;margin-bottom:6px}
.th{width:11px;height:826px;background:#c1c1c1;margin-bottom:auto}
</style><div class="up"></div><div class="th"></div><div class="dn"></div>`);

define('quiz-page', `<style>
:host{display:flex;flex:1;min-height:0;background:#fff;font:17.500px/25px "Liberation Sans",sans-serif}
.doc{flex:1;min-width:0}
h1{margin:62px 0 11px 25px;font-size:39.400px;line-height:51px;color:#333}
bread-crumbs{margin-left:25px}
.cols{display:flex;margin:13px 0 0 25px;align-items:flex-start}
question-info{margin:1px 7px 0 46px}question-body{margin-top:1px}
.nav{display:flex;justify-content:space-between;margin:57px 25px 0 488px}
</style><div class="doc"><site-header></site-header><h1><text-line w="1249">Компютърни мрежи, летен семестър 2016/2017, сп. КН, Поток 2</text-line></h1><bread-crumbs></bread-crumbs>
<div class="cols"><quiz-nav></quiz-nav><question-info></question-info><question-body></question-body></div>
<div class="nav"><page-button><text-line w="165">Предишна страница</text-line></page-button><page-button><text-line w="165">Следваща страница</text-line></page-button></div></div><scroll-track></scroll-track>`);

define('desktop-screen', `<style>
:host{display:flex;flex-direction:column;width:1920px;height:1080px;overflow:hidden}
.main{display:flex;flex:1;min-height:0}.win{display:flex;flex-direction:column;flex:1;min-width:0}
</style><system-bar></system-bar><div class="main"><app-dock></app-dock><div class="win"><browser-frame></browser-frame><quiz-page></quiz-page></div></div>`);
</script>
</body>
</html>
